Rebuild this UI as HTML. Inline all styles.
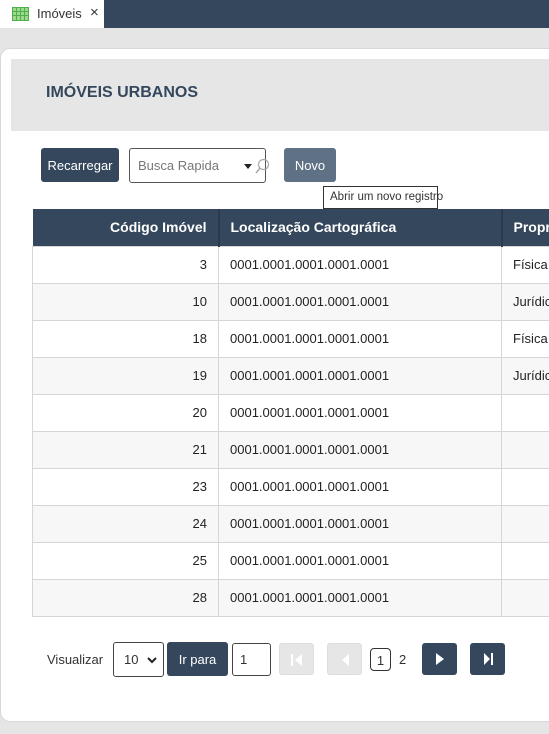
<!DOCTYPE html><html><head><style>
*{box-sizing:border-box}body{margin:0;width:549px;height:734px;overflow:hidden;background:#e5e5e5;font-family:"Liberation Sans",sans-serif;position:relative;font-size:13px;color:#333}
.a{position:absolute}
.top{left:0;top:0;width:549px;height:28px;background:#34475c}
.tab{left:0;top:0;width:104px;height:28px;background:#fff;font-size:13px}
.card{left:0;top:48px;width:560px;height:674px;background:#fff;border-radius:10px 0 0 10px;border:1px solid #d8d8d8}
.hdr{left:11px;top:59px;width:538px;height:72px;background:#e6e6e6}
.btn{background:#34475c;color:#fff;border-radius:3px;display:flex;align-items:center;justify-content:center;font-size:13px}
table{border-collapse:collapse;position:absolute;left:32px;top:209px;width:540px;table-layout:fixed}
th{background:#34475c;color:#fff;height:37px;font-size:14px;text-align:left;padding:0 11px;border-right:2px solid #2a3a4b}
td{height:37px;border:1px solid #d6d6d6;padding:0 11px;font-size:13px;color:#222}
tr:nth-child(odd) td{background:#f7f7f7}
.pg{width:35px;height:32px;border-radius:3px}
</style></head><body>
<div class="a top"></div>
<div class="a tab"><svg class="a" style="left:12px;top:7px" width="17" height="14"><rect x="0.5" y="0.5" width="16" height="13" fill="#9fd88a" stroke="#4caf50"/><path d="M0 4.5H17M0 8.5H17M4.5 0V14M8.5 0V14M12.5 0V14" stroke="#4caf50"/></svg><span class="a" style="left:37px;top:6px">Imóveis</span><span class="a" style="left:90px;top:4px;font-size:15px">×</span></div>
<div class="a card"></div>
<div class="a hdr"><span class="a" style="left:35px;top:25px;font-weight:bold;font-size:16px;color:#34475c">IMÓVEIS URBANOS</span></div>
<div class="a btn" style="left:41px;top:148px;width:78px;height:34px">Recarregar</div>
<div class="a" style="left:129px;top:148px;width:137px;height:35px;border:1px solid #555;border-radius:3px;background:#fff"><span class="a" style="left:8px;top:9px;color:#777">Busca Rapida</span><span class="a" style="left:114px;top:15px;width:0;height:0;border-left:4px solid transparent;border-right:4px solid transparent;border-top:5px solid #222"></span><svg class="a" style="left:125px;top:9px" width="15" height="17"><circle cx="8.5" cy="6.5" r="5" fill="none" stroke="#aaa" stroke-width="1.2"/><path d="M5 10L1 15" stroke="#aaa" stroke-width="1.5"/></svg></div>
<div class="a btn" style="left:284px;top:148px;width:52px;height:34px;background:#5f7185">Novo</div>
<div class="a" style="left:323px;top:186px;width:115px;height:23px;border:1px solid #333;background:#fff;font-size:11.5px;padding:4px 6px;white-space:nowrap">Abrir um novo registro</div>
<table><colgroup><col style="width:186px"><col style="width:283px"><col></colgroup>
<tr><th style="text-align:right">Código Imóvel</th><th>Localização Cartográfica</th><th style="white-space:nowrap;overflow:hidden">Proprietário</th></tr>
<tr><td align="right">3</td><td>0001.0001.0001.0001.0001</td><td>Física</td></tr>
<tr><td align="right">10</td><td>0001.0001.0001.0001.0001</td><td>Jurídica</td></tr>
<tr><td align="right">18</td><td>0001.0001.0001.0001.0001</td><td>Física</td></tr>
<tr><td align="right">19</td><td>0001.0001.0001.0001.0001</td><td>Jurídica</td></tr>
<tr><td align="right">20</td><td>0001.0001.0001.0001.0001</td><td></td></tr>
<tr><td align="right">21</td><td>0001.0001.0001.0001.0001</td><td></td></tr>
<tr><td align="right">23</td><td>0001.0001.0001.0001.0001</td><td></td></tr>
<tr><td align="right">24</td><td>0001.0001.0001.0001.0001</td><td></td></tr>
<tr><td align="right">25</td><td>0001.0001.0001.0001.0001</td><td></td></tr>
<tr><td align="right">28</td><td>0001.0001.0001.0001.0001</td><td></td></tr>
</table>
<span class="a" style="left:47px;top:652px">Visualizar</span>
<div class="a" style="left:113px;top:642px;width:51px;height:35px;border:1px solid #444;border-radius:3px;background:#fff"><span class="a" style="left:10px;top:9px">10</span><svg class="a" style="left:33px;top:14px" width="10" height="7"><path d="M1 1L5 5L9 1" fill="none" stroke="#222" stroke-width="2"/></svg></div>
<div class="a btn" style="left:167px;top:642px;width:61px;height:34px">Ir para</div>
<div class="a" style="left:232px;top:643px;width:39px;height:33px;border:1px solid #444;border-radius:3px;background:#fff"><span class="a" style="left:7px;top:8px">1</span></div>
<div class="a pg" style="left:279px;top:643px;background:#e6e6e6;border:1px solid #ddd"><svg class="a" style="left:10px;top:9px" width="14" height="14"><path d="M2 1V13" stroke="#fff" stroke-width="2"/><path d="M12 1V13L5 7Z" fill="#fff"/></svg></div>
<div class="a pg" style="left:327px;top:643px;background:#e6e6e6;border:1px solid #ddd"><svg class="a" style="left:11px;top:9px" width="14" height="14"><path d="M10 1V13L3 7Z" fill="#fff"/></svg></div>
<div class="a" style="left:370px;top:648px;width:21px;height:23px;border:1px solid #333;border-radius:4px;text-align:center;padding-top:4px">1</div>
<span class="a" style="left:399px;top:652px">2</span>
<div class="a pg btn" style="left:422px;top:643px"><svg width="14" height="14"><path d="M3 1V13L11 7Z" fill="#fff"/></svg></div>
<div class="a pg btn" style="left:470px;top:643px"><svg width="14" height="14"><path d="M3 1V13L9 7Z" fill="#fff"/><path d="M11 1V13" stroke="#fff" stroke-width="2"/></svg></div>
</body></html>
